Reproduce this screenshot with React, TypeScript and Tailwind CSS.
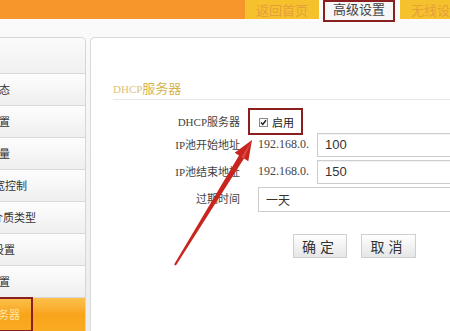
import React from 'react';

const menuItems = [
    { label: '态', box: 'w-[10px]' },
    { label: '置', box: 'w-[10px]' },
    { label: '量', box: 'w-[10px]' },
    { label: '宽控制', box: 'w-[27px]' },
    { label: '介质类型', box: 'w-[36px]' },
    { label: '设置', box: 'w-[15px]' },
    { label: '置', box: 'w-[10px]' },
];

const serif = 'font-["Liberation_Serif","Noto_Sans_CJK_SC",serif]';

const App: React.FC = () => {
    return (
        <div className={`relative h-[331px] w-[450px] overflow-hidden bg-gradient-to-b from-[#fbfbfb] to-[#ececec] ${serif}`}>
            {/* Top nav */}
            <header className='flex h-[19px] items-start font-["Noto_Sans_CJK_SC",sans-serif] text-[13px]'>
                <div className="h-[19px] w-[245px] shrink-0 bg-[#f7962b]" />
                <div className="flex h-[19px] w-[74px] shrink-0 items-center justify-center bg-[#f5c22e] text-[#e79f3a]">
                    返回首页
                </div>
                <div className="ml-[4px] flex h-[22px] w-[72px] shrink-0 items-center justify-center border-2 border-[#8b1f1f] bg-[#f7f7f7] pb-[4px] text-[#444]">
                    高级设置
                </div>
                <div className="ml-[5px] flex h-[19px] w-[74px] shrink-0 items-center justify-center bg-[#f5c22e] text-[#e79f3a]">
                    无线设置
                </div>
            </header>

            <div className="mt-[18px] flex h-[294px]">
                {/* Sidebar */}
                <aside className='flex w-[86px] shrink-0 flex-col overflow-hidden rounded-tr-[5px] border-t border-r border-[#d6d6d6] bg-[#f4f4f4] font-["Noto_Sans_CJK_SC",sans-serif] text-[11px] text-[#333]'>
                    <div className="h-[36px] shrink-0 border-b border-[#d9d9d9] bg-gradient-to-b from-[#fbfbfb] to-[#f0f0f0]" />
                    {menuItems.map((item, i) => (
                        <div
                            key={i}
                            className="flex h-[32px] shrink-0 items-center border-b border-[#d9d9d9] bg-gradient-to-b from-[#fdfdfd] to-[#efefef]"
                        >
                            <div className={`flex shrink-0 justify-end ${item.box}`}>
                                <span className="shrink-0 whitespace-nowrap">{item.label}</span>
                            </div>
                        </div>
                    ))}
                    {/* Selected item */}
                    <div className="relative flex h-[33px] shrink-0 items-center bg-gradient-to-b from-[#fbc04a] via-[#f9a51b] to-[#f8ab22] text-[#fde6a6]">
                        <div className="flex w-[20px] shrink-0 justify-end">
                            <span className="shrink-0 whitespace-nowrap">务器</span>
                        </div>
                        <div className="absolute left-[-2px] top-[-1px] h-[35px] w-[35px] border-2 border-[#8b1f1f]" />
                    </div>
                </aside>

                {/* Main panel */}
                <main className="ml-[4px] flex-1 rounded-tl-[5px] border-t border-l border-[#d9d9d9] bg-white">
                    <div className="ml-[22px] mt-[43px] border-b border-[#e8e8e8] pb-[2px] text-[13px] leading-[16px] text-[#d6b54e]">
                        <span className="text-[11px] text-[#dcc278]">DHCP</span>服务器
                    </div>

                    <div className="ml-[22px] mt-[11px] grid grid-cols-[127px_1fr] gap-x-[18px] text-[11px] text-[#444]">
                        {/* DHCP enable */}
                        <div className="flex h-[22px] items-center justify-end whitespace-nowrap">DHCP服务器</div>
                        <div className="relative flex h-[22px] items-center">
                            <svg width="9" height="9" viewBox="0 0 9 9" className="ml-[1px]">
                                <rect x="0.5" y="0.5" width="8" height="8" fill="#fafafa" stroke="#8a8a8a" />
                                <path d="M2 4.5 L3.8 6.4 L7 2.3" fill="none" stroke="#222" strokeWidth="1.5" />
                            </svg>
                            <span className='ml-[4px] font-["Noto_Sans_CJK_SC",sans-serif] text-[11px] text-[#222]'>启用</span>
                            <div className="absolute left-[-10px] top-[-3px] h-[27px] w-[55px] border-2 border-[#8b1f1f]" />
                        </div>

                        {/* Pool start */}
                        <div className="flex h-[24px] items-center justify-end whitespace-nowrap">IP池开始地址</div>
                        <div className="flex h-[24px] items-center">
                            <span className="w-[50px] shrink-0 pb-[3px] text-[12px] text-[#444]">192.168.0.</span>
                            <div className='ml-[9px] flex h-[24px] w-[200px] shrink-0 items-center border border-[#cccccc] pl-[7px] font-["Liberation_Sans",sans-serif] text-[13px] text-[#333] shadow-[inset_0_1px_1px_rgba(0,0,0,0.06)]'>
                                100
                            </div>
                        </div>

                        {/* Pool end */}
                        <div className="mt-[3px] flex h-[24px] items-center justify-end whitespace-nowrap">IP池结束地址</div>
                        <div className="mt-[3px] flex h-[24px] items-center">
                            <span className="w-[50px] shrink-0 pb-[3px] text-[12px] text-[#444]">192.168.0.</span>
                            <div className='ml-[9px] flex h-[24px] w-[200px] shrink-0 items-center border border-[#cccccc] pl-[7px] font-["Liberation_Sans",sans-serif] text-[13px] text-[#333] shadow-[inset_0_1px_1px_rgba(0,0,0,0.06)]'>
                                150
                            </div>
                        </div>

                        {/* Lease time */}
                        <div className="mt-[3px] flex h-[25px] items-center justify-end whitespace-nowrap">过期时间</div>
                        <div className="mt-[3px] flex h-[25px] w-[260px] items-center border border-[#cccccc] pl-[7px] font-['Noto_Sans_CJK_SC',sans-serif] text-[12px] text-[#333]">
                            一天
                        </div>

                        {/* Buttons */}
                        <div />
                        <div className='mt-[22px] ml-[35px] flex gap-[14px] font-["Noto_Sans_CJK_SC",sans-serif] text-[14px] text-[#333]'>
                            <button className="h-[24px] w-[54px] border border-[#cfcfcf] bg-gradient-to-b from-white to-[#e6e6e6] tracking-[4px]">
                                确定
                            </button>
                            <button className="h-[24px] w-[55px] border border-[#cfcfcf] bg-gradient-to-b from-white to-[#e6e6e6] tracking-[4px]">
                                取消
                            </button>
                        </div>
                    </div>
                </main>
            </div>

            {/* Annotation arrow */}
            <svg className="pointer-events-none absolute left-0 top-0" width="450" height="331" viewBox="0 0 450 331">
                <polygon
                    points="252,140 248.3,161.2 244,158.6 175.9,265.5 174.1,264.5 239,155.4 234.7,152.8"
                    fill="#c9251f"
                />
                <polygon points="252,140 244,158.6 241.5,157" fill="#e0473d" />
            </svg>
        </div>
    );
};

export default App;
